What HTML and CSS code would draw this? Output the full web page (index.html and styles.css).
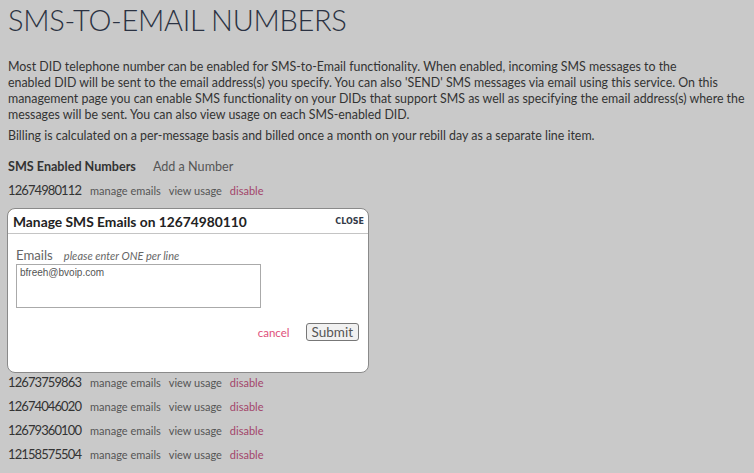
FILE: index.html
```html
<!DOCTYPE html>
<html>
<head>
<meta charset="utf-8">
<link rel="stylesheet" href="styles.css">
</head>
<body>
<div class="page">
  <h1 class="title">SMS-TO-EMAIL NUMBERS</h1>
  <p class="intro">Most DID telephone number can be enabled for SMS-to-Email functionality. When enabled, incoming SMS messages to the<br>enabled DID will be sent to the email address(s) you specify. You can also 'SEND' SMS messages via email using this service. On this management page you can enable SMS functionality on your DIDs that support SMS as well as specifying the email address(s) where the messages will be sent. You can also view usage on each SMS-enabled DID.</p>
  <p class="intro">Billing is calculated on a per-message basis and billed once a month on your rebill day as a separate line item.</p>

  <div class="tabs">
    <span class="tab active">SMS Enabled Numbers</span>
    <span class="tab">Add a Number</span>
  </div>

  <div class="list">
    <div class="row"><span class="num">12674980112</span><a class="lnk">manage emails</a><a class="lnk">view usage</a><a class="lnk dis">disable</a></div>
    <div class="row"><span class="num">12674980110</span><a class="lnk">manage emails</a><a class="lnk">view usage</a><a class="lnk dis">disable</a></div>

    <div class="modal">
      <div class="modal-head">
        <span class="modal-title">Manage SMS Emails on 12674980110</span>
        <span class="close">CLOSE</span>
      </div>
      <div class="modal-body">
        <div class="field-label"><span class="lbl">Emails</span><span class="hint">please enter ONE per line</span></div>
        <textarea class="emails">bfreeh@bvoip.com</textarea>
        <div class="actions">
          <a class="cancel">cancel</a>
          <button class="submit">Submit</button>
        </div>
      </div>
    </div>

    <div class="row"><span class="num">12673759863</span><a class="lnk">manage emails</a><a class="lnk">view usage</a><a class="lnk dis">disable</a></div>
    <div class="row"><span class="num">12674046020</span><a class="lnk">manage emails</a><a class="lnk">view usage</a><a class="lnk dis">disable</a></div>
    <div class="row"><span class="num">12679360100</span><a class="lnk">manage emails</a><a class="lnk">view usage</a><a class="lnk dis">disable</a></div>
    <div class="row"><span class="num">12158575504</span><a class="lnk">manage emails</a><a class="lnk">view usage</a><a class="lnk dis">disable</a></div>
  </div>
</div>
</body>
</html>
```

FILE: styles.css
```css
html, body {
  margin: 0;
  padding: 0;
  background: #c9c9c9;
}
body {
  font-family: "Lato", "Liberation Sans", sans-serif;
  color: #333;
  overflow: hidden;
}
.page {
  padding: 0 4px 0 8px;
}
.title {
  margin: 0;
  padding-top: 3px;
  font-size: 29px;
  font-weight: 300;
  color: #2b3242;
  line-height: 34px;
  letter-spacing: -0.3px;
}
.intro {
  margin: 0;
  font-size: 12.4px;
  line-height: 16px;
  color: #333;
}
.title + .intro {
  margin-top: 22px;
}
.intro + .intro {
  margin-top: 5px;
}
.tabs {
  margin-top: 14px;
  display: flex;
  gap: 17px;
  font-size: 12.6px;
  line-height: 18px;
}
.tab {
  color: #555;
}
.tab.active {
  font-weight: 700;
  color: #333;
}
.list {
  margin-top: 2px;
}
.row {
  display: flex;
  align-items: baseline;
  height: 24px;
  line-height: 24px;
}
.num {
  font-size: 13px;
  letter-spacing: -0.9px;
  color: #333;
  margin-right: 9px;
}
.lnk {
  font-size: 11px;
  color: #555;
  margin-right: 8px;
}
.lnk.dis {
  color: #a3456a;
}
.modal {
  position: relative;
  margin: -18px 0 -3px -1px;
  width: 362px;
  height: 165px;
  background: #fff;
  border: 1px solid #8a8a8a;
  border-radius: 8px;
  box-sizing: border-box;
}
.modal-head {
  display: flex;
  justify-content: space-between;
  align-items: center;
  height: 24px;
  padding: 0 4px 0 5px;
  border-bottom: 1px solid #c4c4c4;
}
.modal-title {
  font-weight: 700;
  font-size: 13.8px;
  color: #222;
}
.close {
  font-family: "DejaVu Sans", sans-serif;
  font-weight: 700;
  font-size: 8px;
  color: #333a48;
}
.modal-body {
  padding: 13px 8px 0 8px;
}
.field-label {
  display: flex;
  align-items: baseline;
  gap: 11px;
}
.lbl {
  font-size: 13.2px;
  color: #666;
}
.hint {
  font-size: 11px;
  font-style: italic;
  color: #666;
}
.emails {
  display: block;
  margin-top: 1px;
  width: 245px;
  height: 44px;
  box-sizing: border-box;
  border: 1px solid #aaa;
  padding: 2px 3px;
  font-family: "Liberation Sans", Arial, sans-serif;
  font-size: 10px;
  color: #555;
  resize: none;
}
.actions {
  display: flex;
  justify-content: flex-end;
  align-items: center;
  gap: 16px;
  margin-top: 15px;
  padding-right: 1px;
}
.cancel {
  font-size: 11.5px;
  color: #e0507b;
}
.submit {
  font-family: "Lato", sans-serif;
  font-size: 13.5px;
  color: #555;
  background: #f1f1f1;
  border: 1px solid #777;
  border-radius: 3px;
  padding: 0 5px;
  height: 18px;
  line-height: 16px;
}
```
